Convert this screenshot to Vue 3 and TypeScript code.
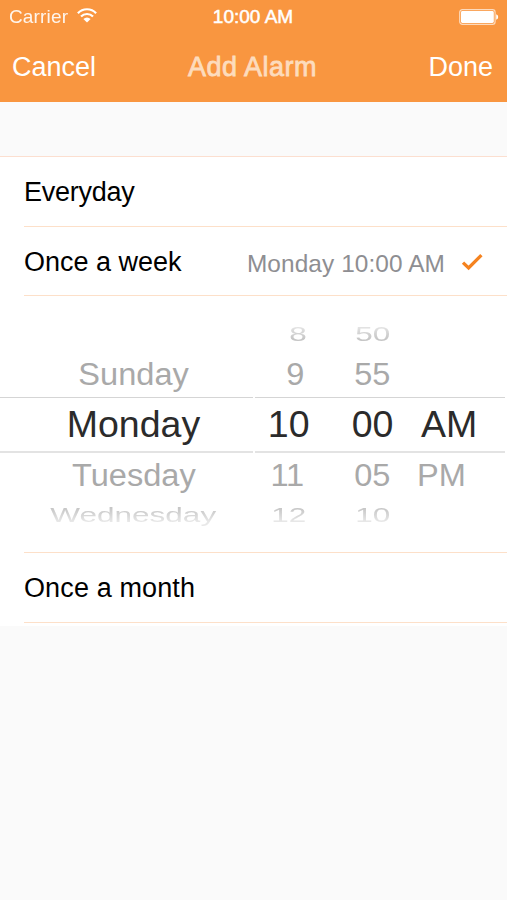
<script setup lang="ts">
interface Wheel {
  name: string
  items: string[]
}

const wheels: Wheel[] = [
  { name: 'day', items: ['', 'Sunday', 'Monday', 'Tuesday', 'Wednesday'] },
  { name: 'hour', items: ['8', '9', '10', '11', '12'] },
  { name: 'minute', items: ['50', '55', '00', '05', '10'] },
  { name: 'period', items: ['', '', 'AM', 'PM', ''] },
]

const depth = ['far', 'near', 'selected', 'near', 'far']
</script>

<template>
  <main class="screen">
    <header class="top">
      <div class="status">
        <div class="carrier">
          <span>Carrier</span>
          <svg class="wifi" width="20" height="15" viewBox="0 0 20 15" fill="none" stroke="#fff" stroke-width="2.2">
            <path d="M0.9 5.3 A12.2 12.2 0 0 1 19.1 5.3" />
            <path d="M4 8.6 A8.2 8.2 0 0 1 16 8.6" />
            <path d="M6.4 11.1 A5 5 0 0 1 13.6 11.1 L10 14.6 Z" fill="#fff" stroke="none" />
          </svg>
        </div>
        <span class="time">10:00 AM</span>
        <svg class="battery" width="40" height="16" viewBox="0 0 40 16">
          <rect x="0.7" y="0.7" width="35.4" height="14.6" rx="2.6" fill="none" stroke="#fff" stroke-opacity="0.65" stroke-width="1.2" />
          <rect x="2" y="2" width="32.8" height="12" rx="1.4" fill="#fff" />
          <path d="M37.2 5.2 Q39.2 6 39.2 8 T37.2 10.8 Z" fill="#fff" />
        </svg>
      </div>
      <nav class="bar">
        <span class="action">Cancel</span>
        <h1 class="title">Add Alarm</h1>
        <span class="action done">Done</span>
      </nav>
    </header>

    <section class="list">
      <div class="row first"><span class="label everyday">Everyday</span></div>
      <div class="row second">
        <span class="label">Once a week</span>
        <span class="detail">Monday 10:00 AM</span>
        <svg class="check" width="22" height="18" viewBox="0 0 22 18" fill="none" stroke="#f5831f" stroke-width="3.3">
          <path d="M2 9.6 L7.6 15 L20.4 2.2" />
        </svg>
      </div>
      <div class="picker">
        <div v-for="wheel in wheels" :key="wheel.name" class="wheel" :class="wheel.name">
          <div v-for="(item, i) in wheel.items" :key="i" class="slot" :class="depth[i]">
            <span class="value">{{ item }}</span>
          </div>
        </div>
      </div>
      <div class="row last"><span class="label month">Once a month</span></div>
    </section>
  </main>
</template>

<style>
body {
  margin: 0;
  background: #fafafa;
}
</style>

<style scoped>
.screen {
  width: 507px;
  height: 900px;
  overflow: hidden;
  background: #fafafa;
  font-family: "Liberation Sans", Arial, sans-serif;
  color: #000;
}
.top {
  height: 102px;
  background: #f99640;
  color: #fff;
}
.status {
  height: 33px;
  display: grid;
  grid-template-columns: 1fr auto 1fr;
  align-items: center;
  padding: 0 8px 0 9px;
  font-size: 19px;
  line-height: 33px;
}
.carrier {
  display: flex;
  align-items: center;
  gap: 9px;
  letter-spacing: 0.15px;
}
.carrier span {
  opacity: 0.9;
}
.wifi {
  margin-bottom: 2px;
}
.time {
  margin-right: 2px;
  -webkit-text-stroke: 0.5px #fff;
}
.battery {
  justify-self: end;
}
.bar {
  height: 67px;
  display: grid;
  grid-template-columns: 1fr auto 1fr;
  align-items: center;
  padding: 1px 14px 0 12px;
  font-size: 27px;
  line-height: 67px;
}
.title {
  margin: 0;
  font-size: 27px;
  font-weight: 400;
  letter-spacing: 0.5px;
  color: #fddcbd;
  -webkit-text-stroke: 0.8px #fddcbd;
}
.done {
  justify-self: end;
}
.list {
  margin-top: 54px;
  height: 469px;
  background: #fff;
  border-top: 1px solid #fcdfd0;
}
.row {
  height: 69px;
  margin-left: 24px;
  padding-right: 24px;
  display: flex;
  align-items: center;
  border-bottom: 1px solid #fde0c9;
}
.row.second {
  height: 68px;
}
.label {
  flex: 1;
  padding-top: 2px;
  font-size: 27px;
  line-height: 67px;
}
.everyday {
  letter-spacing: -0.25px;
}
.month {
  letter-spacing: 0.12px;
}
.detail {
  font-size: 24.4px;
  line-height: 67px;
  padding-top: 4px;
  letter-spacing: 0.1px;
  color: #8e8e92;
}
.check {
  margin-left: 16px;
  margin-top: 1px;
}
.picker {
  height: 239px;
  padding-top: 17px;
  display: grid;
  grid-template-columns: 254px 67px 90px 96px;
  background:
    linear-gradient(#d5d5d5, #d5d5d5) 0 101px / 253px 1px no-repeat,
    linear-gradient(#d5d5d5, #d5d5d5) 255px 101px / 250px 1px no-repeat,
    linear-gradient(#e3e3e3, #e3e3e3) 0 155px / 253px 2px no-repeat,
    linear-gradient(#e3e3e3, #e3e3e3) 255px 155px / 250px 2px no-repeat;
}
.slot {
  height: 40px;
  display: flex;
  align-items: center;
  line-height: 40px;
  white-space: nowrap;
}
.slot.selected {
  height: 61px;
  font-size: 37.5px;
  color: #2b2b2b;
}
.day .selected {
  padding-top: 1px;
  height: 60px;
}
.near {
  font-size: 31px;
  color: #a9a9a9;
}
.far {
  font-size: 21px;
  color: #c6c6c6;
}
.value {
  display: block;
}
.near .value {
  transform: translateY(1.5px) scaleX(1.05);
}
.far .value {
  transform: translateY(1px) scaleX(1.5);
}
.slot:first-child {
  mask-image: linear-gradient(to bottom, rgba(0, 0, 0, 0.4) 30%, #000 65%);
}
.slot:last-child {
  mask-image: linear-gradient(to top, rgba(0, 0, 0, 0.4) 30%, #000 65%);
}
.day .slot {
  justify-content: center;
  padding-left: 13px;
}
.hour .slot {
  justify-content: flex-end;
  padding-right: 11.5px;
}
.hour .near {
  padding-right: 16.5px;
}
.hour .far {
  padding-right: 14.5px;
}
.hour .value {
  transform-origin: right center;
}
.minute .slot {
  justify-content: center;
  padding-left: 13px;
}
.period .slot {
  padding-left: 10px;
}
.period .near {
  padding-left: 6px;
}
.period .value {
  transform-origin: left center;
}
.last {
  border-top: 1px solid #fde0c9;
}
</style>
